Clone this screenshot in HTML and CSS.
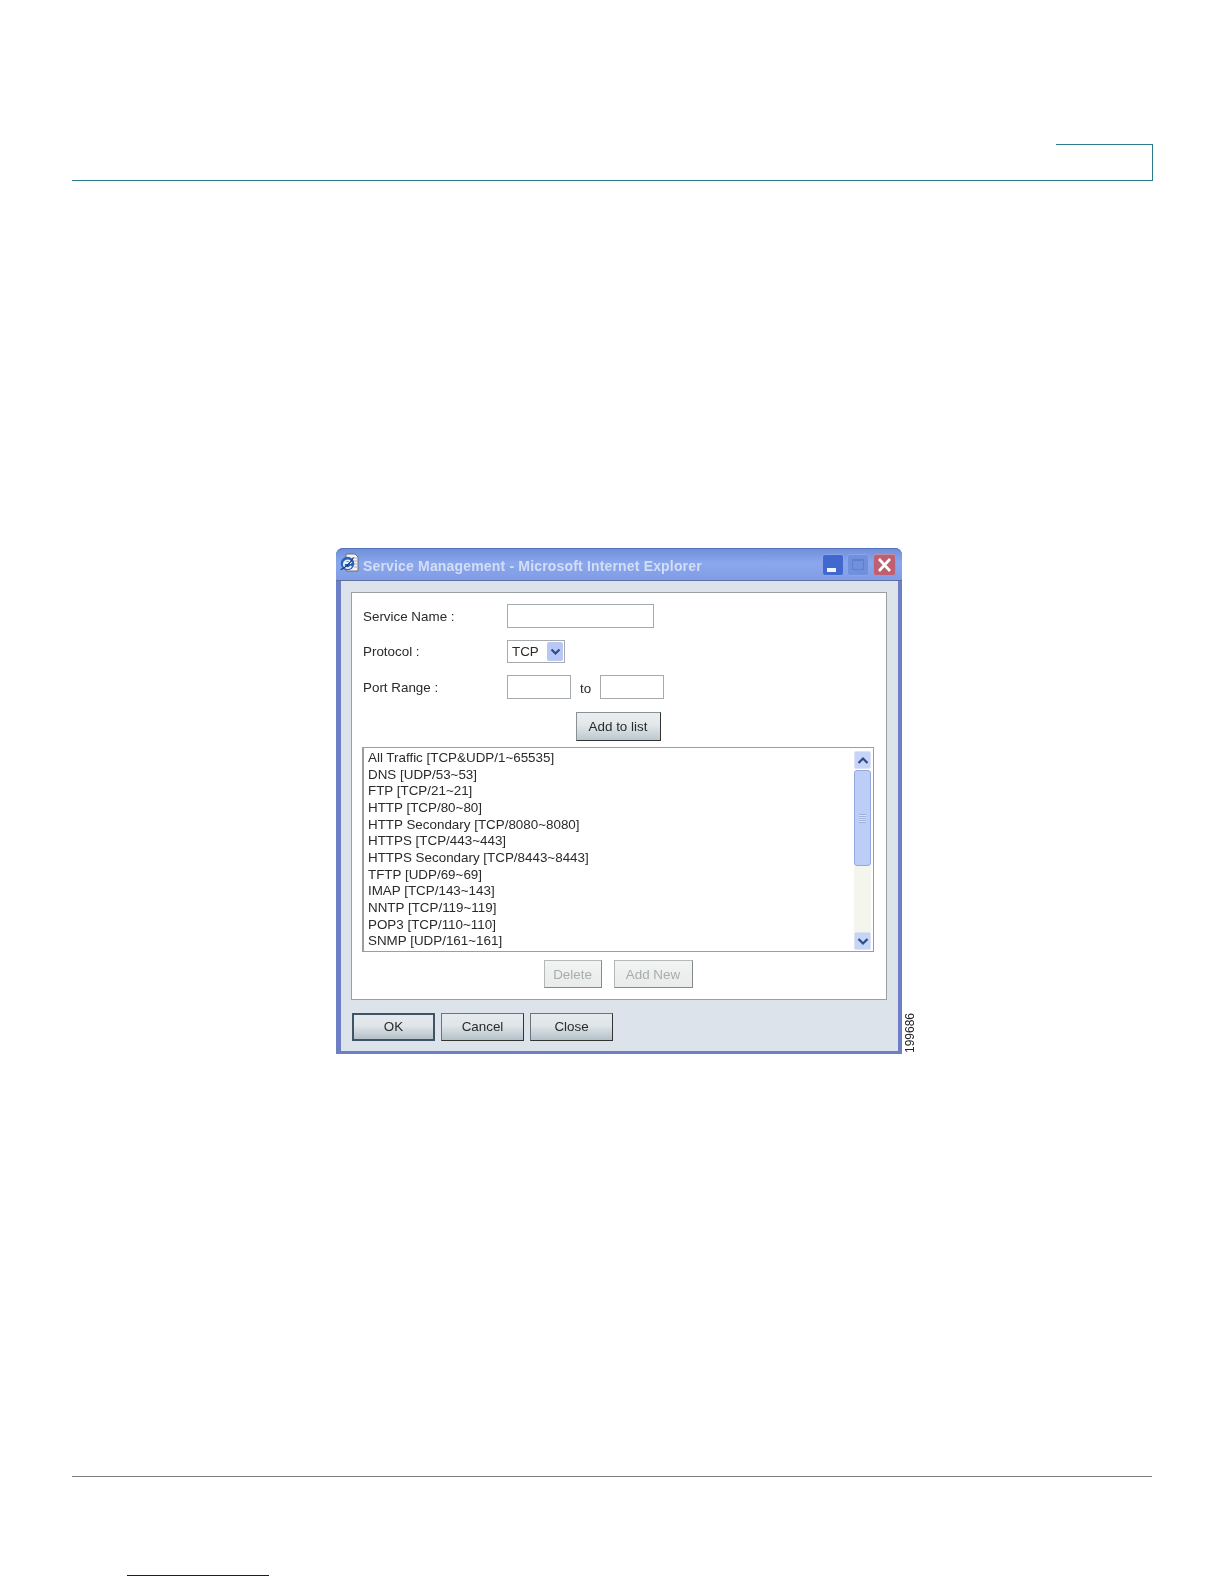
FILE: index.html
```html
<!DOCTYPE html>
<html lang="en">
  <head>
    <meta charset="UTF-8" />
    <meta name="viewport" content="width=device-width, initial-scale=1.0" />
    <title>Service Management</title>
    <link rel="stylesheet" href="styles.css">
  </head>
  <body>
    <!-- Page header rule with the tab outline -->
    <div class="page-header">
      <div class="page-tab"></div>
    </div>

    <!-- Screenshot figure -->
    <div class="figure">
      <div class="window">
        <div class="title-bar">
          <svg class="ie-icon" width="21" height="21" viewBox="0 0 21 21">
            <path d="M7 1h9l3 3v14H7z" fill="#f4f4ee" stroke="#6a6f80" stroke-width="1" />
            <path d="M14 5h4M15 8h3M15 11h3M15 14h3" stroke="#a9b0bf" stroke-width="1" />
            <circle cx="8.500" cy="10.500" r="6.800" fill="#2a62bd" />
            <path d="M5 10h7.200M12.200 13a3.900 3.900 0 1 1 .2-3" fill="none" stroke="#e9f2ff" stroke-width="1.800" />
            <path d="M1.500 16.500c3-.5 10-6 13-12" fill="none" stroke="#173a80" stroke-width="1.200" />
          </svg>
          <span class="title-text">Service Management - Microsoft Internet Explorer</span>
          <div class="window-controls">
            <div class="control control-min"><span class="min-dash"></span></div>
            <div class="control control-max"><span class="max-box"></span></div>
            <div class="control control-close">
              <svg width="23" height="22" viewBox="0 0 23 22">
                <path d="M6 5l11 12M17 5L6 17" stroke="#fff" stroke-width="2.6" />
              </svg>
            </div>
          </div>
        </div>

        <div class="window-frame">
          <div class="panel">
            <div class="form-row">
              <label class="field-label">Service Name :</label>
              <input class="text-input input-name" type="text" />
            </div>
            <div class="form-row row-protocol">
              <label class="field-label">Protocol :</label>
              <div class="select-box">
                <span class="select-value">TCP</span>
                <span class="select-arrow">
                  <svg width="11" height="8" viewBox="0 0 11 8">
                    <path d="M1.500 1.500l4 4 4-4" fill="none" stroke="#2f4a8c" stroke-width="2.200" />
                  </svg>
                </span>
              </div>
            </div>
            <div class="form-row">
              <label class="field-label">Port Range :</label>
              <div class="port-fields">
                <input class="text-input input-port" type="text" />
                <span class="port-to">to</span>
                <input class="text-input input-port" type="text" />
              </div>
            </div>

            <div class="button-row add-row">
              <button class="btn btn-add">Add to list</button>
            </div>

            <div class="service-list">
              <div class="list-rows">
                <div>All Traffic [TCP&amp;UDP/1~65535]</div>
                <div>DNS [UDP/53~53]</div>
                <div>FTP [TCP/21~21]</div>
                <div>HTTP [TCP/80~80]</div>
                <div>HTTP Secondary [TCP/8080~8080]</div>
                <div>HTTPS [TCP/443~443]</div>
                <div>HTTPS Secondary [TCP/8443~8443]</div>
                <div>TFTP [UDP/69~69]</div>
                <div>IMAP [TCP/143~143]</div>
                <div>NNTP [TCP/119~119]</div>
                <div>POP3 [TCP/110~110]</div>
                <div>SNMP [UDP/161~161]</div>
              </div>
              <div class="scrollbar">
                <div class="scroll-arrow">
                  <svg width="12" height="9" viewBox="0 0 12 9">
                    <path d="M1.500 7l4.500-4.500 4.500 4.500" fill="none" stroke="#2f4a8c" stroke-width="2.200" />
                  </svg>
                </div>
                <div class="scroll-thumb"><span class="thumb-grip"></span></div>
                <div class="scroll-track"></div>
                <div class="scroll-arrow">
                  <svg width="12" height="9" viewBox="0 0 12 9">
                    <path d="M1.500 2l4.500 4.500 4.500-4.500" fill="none" stroke="#2f4a8c" stroke-width="2.200" />
                  </svg>
                </div>
              </div>
            </div>

            <div class="button-row list-actions">
              <button class="btn btn-disabled btn-delete">Delete</button>
              <button class="btn btn-disabled btn-new">Add New</button>
            </div>
          </div>

          <div class="dialog-actions">
            <button class="btn btn-dialog btn-default">OK</button>
            <button class="btn btn-dialog">Cancel</button>
            <button class="btn btn-dialog">Close</button>
          </div>
        </div>
      </div>
      <div class="figure-number">199686</div>
    </div>

    <!-- Footer rule and link underline -->
    <div class="page-footer"></div>
    <div class="footer-link"></div>
  </body>
</html>
```

FILE: styles.css
```css
* {
  margin: 0;
  padding: 0;
  box-sizing: border-box;
}

html,
body {
  background: #fff;
}

body {
  font-family: "Liberation Sans", Arial, sans-serif;
  color: #2a2a2a;
  overflow: hidden;
}

.page-header {
  margin: 0 71px 0 72px;
  padding-top: 144px;
  border-bottom: 1px solid #2f7a8c;
}

.page-tab {
  margin-left: auto;
  width: 97px;
  height: 36px;
  border-top: 1px solid #2f7a8c;
  border-right: 1px solid #2f7a8c;
}

.figure {
  display: flex;
  align-items: flex-end;
  margin-top: 367px;
  padding-left: 336px;
}

.figure-number {
  writing-mode: vertical-rl;
  transform: rotate(180deg);
  margin: 0 0 1px 2px;
  font-size: 12px;
  line-height: 12px;
  color: #222;
}

.window {
  display: flex;
  flex-direction: column;
  width: 566px;
  height: 506px;
  background: #6d80c6;
  border-left: 5px solid #6d80c6;
  border-right: 4px solid #6d80c6;
  border-bottom: 3px solid #6d80c6;
  border-radius: 7px 7px 0 0;
  filter: blur(0.35px);
}

.title-bar {
  display: flex;
  align-items: center;
  height: 33px;
  margin: 0 -4px 0 -5px;
  padding: 0 6px 0 3px;
  border-top: 1px solid #5574bd;
  border-bottom: 1px solid #5f6f9c;
  border-radius: 7px 7px 0 0;
  background: linear-gradient(#6f90dc, #8ba7ec 45%, #7f9ce6);
}

.ie-icon {
  flex: none;
  margin-top: -3px;
}

.title-text {
  margin-left: 3px;
  padding-top: 2px;
  font-family: "Liberation Sans", sans-serif;
  font-size: 14px;
  font-weight: bold;
  letter-spacing: 0.17px;
  color: #d3def6;
  white-space: nowrap;
}

.window-controls {
  display: flex;
  gap: 3px;
  margin-left: auto;
}

.control {
  display: flex;
  width: 22px;
  height: 22px;
  border-radius: 3px;
  border: 1px solid #8ba4e6;
}

.control-min {
  align-items: flex-end;
  justify-content: center;
  background: #4168cf;
  padding-bottom: 3px;
}

.min-dash {
  width: 9px;
  height: 4px;
  margin-right: 3px;
  background: #f2f5fb;
}

.control-max {
  align-items: center;
  justify-content: center;
  background: #708fdd;
}

.max-box {
  width: 12px;
  height: 11px;
  border: 1px solid #5f7ecb;
  border-top-width: 2px;
}

.control-close {
  width: 23px;
  margin-left: 1px;
  background: #bf5f72;
  border-color: #c78d9c;
  align-items: center;
  justify-content: center;
}

.control-close svg {
  flex: none;
}

.window-frame {
  flex: 1;
  padding: 11px 11px 0 10px;
  background: #dce3ea;
}

.panel {
  height: 408px;
  padding: 11px 12px 0 10px;
  background: #fff;
  border: 1px solid #9a9fa2;
}

.form-row {
  display: grid;
  grid-template-columns: 145px 1fr;
  align-items: center;
  height: 24px;
  margin-bottom: 12px;
}

.row-protocol {
  height: 23px;
}

.field-label {
  padding-left: 1px;
  font-size: 13.400px;
}

.text-input {
  display: block;
  height: 24px;
  background: #fff;
  border: 1px solid #a6abaf;
  outline: none;
}

.input-name {
  width: 147px;
}

.input-port {
  width: 64px;
}

.port-fields {
  display: flex;
}

.port-to {
  width: 29px;
  padding-top: 6px;
  font-size: 13.400px;
  text-align: center;
}

.select-box {
  display: flex;
  align-items: center;
  width: 58px;
  height: 23px;
  padding: 1px;
  border: 1px solid #a6abaf;
}

.select-value {
  padding-left: 3px;
  font-size: 13.400px;
  width: 39px;
}

.select-arrow {
  display: flex;
  align-items: center;
  justify-content: center;
  width: 16px;
  height: 19px;
  background: #b9c8f3;
  border-radius: 2px;
}

.button-row {
  display: flex;
  justify-content: center;
}

.add-row {
  margin-top: 13px;
}

.btn {
  font-family: "Liberation Sans", Arial, sans-serif;
  font-size: 13.400px;
  color: #2a2a2a;
  background: linear-gradient(#e9eef1, #e1e7ea 45%, #bcc8ce);
  border: 1px solid #8a9194;
  border-right-color: #333;
  border-bottom-color: #333;
}

.btn-add {
  width: 85px;
  height: 29px;
}

.service-list {
  display: flex;
  height: 205px;
  margin-top: 6px;
  border: 1px solid #9a9e9e;
  border-left-width: 2px;
}

.list-rows {
  flex: 1;
  padding: 2px 0 0 4px;
  font-size: 13.400px;
  line-height: 16.670px;
  white-space: nowrap;
  overflow: hidden;
}

.scrollbar {
  display: flex;
  flex-direction: column;
  width: 17px;
  margin: 3px 2px 1px 0;
}

.scroll-arrow {
  display: flex;
  align-items: center;
  justify-content: center;
  flex: none;
  height: 18px;
  background: #c6d4f6;
  border: 1px solid #dbe3f5;
  border-radius: 2px;
}

.scroll-thumb {
  display: flex;
  align-items: center;
  justify-content: center;
  flex: none;
  height: 96px;
  margin-top: 1px;
  background: #bccdf7;
  border: 1px solid #94a8dc;
  border-radius: 3px;
}

.thumb-grip {
  width: 7px;
  height: 9px;
  background: repeating-linear-gradient(#9fb0d8 0 1px, #d8e2fb 1px 2px);
}

.scroll-track {
  flex: 1;
  background: #f4f5ec;
}

.list-actions {
  gap: 12px;
  margin-top: 8px;
}

.btn-disabled {
  height: 28px;
  color: #a8acae;
  background: linear-gradient(#f2f3f3, #e9ebeb);
  border-color: #b5b8b8;
  border-right-color: #85898a;
  border-bottom-color: #85898a;
}

.btn-delete {
  width: 58px;
}

.btn-new {
  width: 79px;
}

.dialog-actions {
  display: flex;
  gap: 6px;
  margin-top: 13px;
  padding-left: 1px;
}

.btn-dialog {
  width: 83px;
  height: 28px;
  padding-bottom: 2px;
  border-color: #6c7478;
  border-right-color: #333;
  border-bottom-color: #333;
  background: linear-gradient(#e4eaee, #dfe5e9 45%, #b4c1c8);
}

.btn-default {
  border: 2px solid #3f5566;
}

.page-footer {
  margin: 422px 72px 0;
  border-top: 1px solid #808080;
}

.footer-link {
  width: 142px;
  height: 1px;
  margin: 98px 0 0 127px;
  background: #10108a;
}
```
